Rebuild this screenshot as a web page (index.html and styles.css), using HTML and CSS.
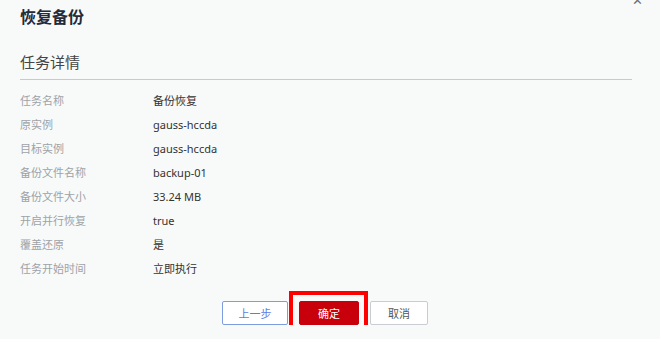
FILE: index.html
```html
<!DOCTYPE html>
<html lang="zh-CN">
<head>
  <meta charset="UTF-8">
  <meta name="viewport" content="width=device-width, initial-scale=1.0">
  <title>恢复备份</title>
  <link rel="stylesheet" href="styles.css">
</head>
<body>
  <div class="dialog">
    <h2 class="dialog-title">恢复备份</h2>
    <span class="close">&#x2715;</span>

    <h3 class="section-title">任务详情</h3>

    <div class="details">
      <div class="row"><span class="label">任务名称</span><span class="value">备份恢复</span></div>
      <div class="row"><span class="label">原实例</span><span class="value">gauss-hccda</span></div>
      <div class="row"><span class="label">目标实例</span><span class="value">gauss-hccda</span></div>
      <div class="row"><span class="label">备份文件名称</span><span class="value">backup-01</span></div>
      <div class="row"><span class="label">备份文件大小</span><span class="value">33.24 MB</span></div>
      <div class="row"><span class="label">开启并行恢复</span><span class="value">true</span></div>
      <div class="row"><span class="label">覆盖还原</span><span class="value">是</span></div>
      <div class="row"><span class="label">任务开始时间</span><span class="value">立即执行</span></div>
    </div>

    <div class="actions">
      <button class="btn btn-prev">上一步</button>
      <button class="btn btn-ok highlight">确定</button>
      <button class="btn btn-cancel">取消</button>
    </div>
  </div>
</body>
</html>
```

FILE: styles.css
```css
body {
  margin: 0;
  background-color: #f7faf9;
  font-family: "Noto Sans", "Noto Sans CJK SC", sans-serif;
  color: #333;
}
.dialog {
  position: relative;
  padding: 0 28px 0 20px;
}
.dialog-title {
  margin: 0;
  padding-top: 5px;
  font-size: 16px;
  line-height: 24px;
  font-weight: bold;
  color: #252b3a;
}
.close {
  position: absolute;
  top: -9px;
  right: 17px;
  font-size: 13px;
  color: #6a6f7c;
}
.section-title {
  margin: 23px 0 0;
  padding-bottom: 7px;
  font-size: 15px;
  line-height: 20px;
  font-weight: normal;
  color: #444;
  border-bottom: 1px solid #c8cbcd;
}
.details {
  margin-top: 8px;
}
.row {
  display: flex;
  height: 24px;
  align-items: center;
  font-size: 11px;
}
.label {
  flex: none;
  display: block;
  width: 133px;
  color: #9fa2a7;
}
.value {
  display: block;
  color: #333;
}
.actions {
  display: flex;
  justify-content: center;
  gap: 11px;
  margin-top: 21px;
  padding-right: 2px;
}
.btn {
  position: relative;
  height: 24px;
  padding: 0;
  border-radius: 2px;
  font-family: inherit;
  font-size: 11px;
  cursor: pointer;
  background-color: #fff;
}
.btn-prev {
  width: 66px;
  border: 1px solid #7e9de0;
  color: #5e7ce0;
}
.btn-ok {
  width: 60px;
  border: 1px solid #c7000b;
  background-color: #c7000b;
  color: #fff;
}
.btn-cancel {
  width: 58px;
  border: 1px solid #c9ccd0;
  color: #555;
}
.highlight::after {
  content: "";
  position: absolute;
  top: -11px;
  right: -10px;
  bottom: -10px;
  left: -11px;
  border: 4px solid #ff0000;
}
```
